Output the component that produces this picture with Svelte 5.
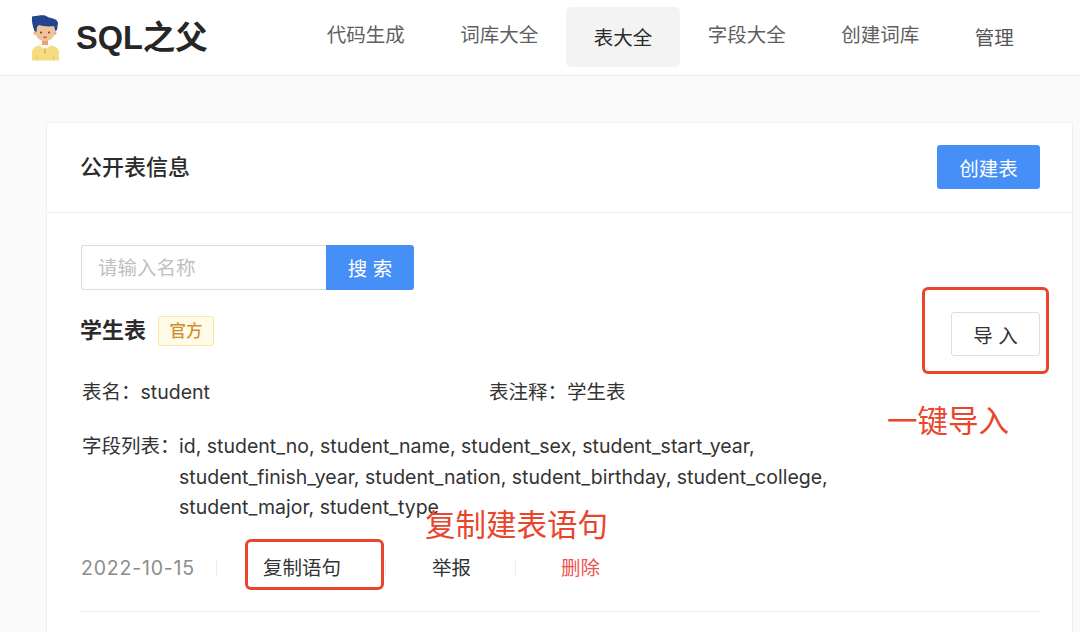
<script>
  const navItems = [
    { label: '代码生成' },
    { label: '词库大全' },
    { label: '表大全', active: true },
    { label: '字段大全' },
    { label: '创建词库' },
    { label: '管理', low: true }
  ];
</script>

<div class="page">
  <header class="nav">
    <div class="brand">
      <svg class="avatar" viewBox="0 0 30 46" width="30" height="46" aria-hidden="true">
        <path d="M1 45.500V37c0-3.500 3-5.500 8-7l5.500 2 5.500-2c5 1.500 8 3.500 8 7v8.500z" fill="#f6dc82"/>
        <path d="M9.500 27.500l4.500 3.500 4.500-3.500 2 3-6.500 3.500-6.500-3.500z" fill="#fbf7ee"/>
        <path d="M13.300 33.500h1.400l.5 5h-2.400z" fill="#e3b64f"/>
        <path d="M5.500 40h.8v5.500h-.8zM22 40h.8v5.500H22z" fill="#e9c561"/>
        <rect x="11" y="23" width="6" height="7" fill="#dfa678"/>
        <circle cx="4.500" cy="18" r="2" fill="#e6b088"/>
        <circle cx="23.500" cy="18" r="2" fill="#e6b088"/>
        <path d="M5 9h18v10c0 4-4 7-9 7s-9-3-9-7z" fill="#f0c39a"/>
        <path d="M1 1.500C6 1 10 0 14 .500L18 2.500C22 3 27 5 27 8L26 15 24 16 23 11C18 12 11 11 8 10L6 12 5.500 17 3.500 16C1.500 11 .5 6 1 1.500z" fill="#234590"/>
        <circle cx="10" cy="17.500" r="1" fill="#5b4436"/>
        <circle cx="18" cy="17.500" r="1" fill="#5b4436"/>
        <path d="M11.800 21.500h4.400c-.4 1.300-1.200 1.900-2.200 1.900s-1.800-.6-2.200-1.900z" fill="#d9605a"/>
      </svg>
      <span class="brand-name">SQL之父</span>
    </div>
    <nav class="menu">
      {#each navItems as item}
        <div class="menu-item" class:active={item.active} class:low={item.low}>{item.label}</div>
      {/each}
    </nav>
  </header>

  <main class="content">
    <section class="card">
      <div class="card-head">
        <h2>公开表信息</h2>
        <button class="btn primary create">创建表</button>
      </div>
      <div class="card-body">
        <div class="search">
          <div class="search-input">请输入名称</div>
          <button class="btn primary search-btn">搜 索</button>
        </div>

        <div class="title-row">
          <div class="title-left">
            <span class="title">学生表</span>
            <span class="tag">官方</span>
          </div>
          <button class="btn import">导 入</button>
        </div>

        <div class="info-row">
          <div class="info-cell"><span class="label">表名：</span>student</div>
          <div class="info-cell"><span class="label">表注释：</span>学生表</div>
        </div>

        <div class="fields">
          <div class="fields-label">字段列表：</div>
          <div class="fields-value">id, student_no, student_name, student_sex, student_start_year, student_finish_year, student_nation, student_birthday, student_college, student_major, student_type</div>
        </div>

        <div class="actions">
          <span class="date">2022-10-15</span>
          <span class="act copy">复制语句</span>
          <span class="act report">举报</span>
          <span class="act del">删除</span>
        </div>
        <div class="divider"></div>
      </div>
    </section>
  </main>

  <div class="mark mark-import"></div>
  <div class="mark mark-copy"></div>
  <div class="note note-import">一键导入</div>
  <div class="note note-copy">复制建表语句</div>
</div>

<style>
  :global(body) {
    margin: 0;
    background: #fafafa;
    overflow: hidden;
  }
  .page {
    position: relative;
    width: 1080px;
    height: 632px;
    overflow: hidden;
    background: #fafafa;
    color: #2b2b2b;
    font-family: Inter, "Noto Sans CJK SC", sans-serif;
  }
  .nav {
    display: flex;
    align-items: center;
    height: 76px;
    box-sizing: border-box;
    background: #fff;
    border-bottom: 1px solid #ececec;
    padding-left: 31px;
  }
  .brand {
    display: flex;
    align-items: center;
    gap: 15px;
    width: 268px;
  }
  .avatar {
    display: block;
    margin-top: 0;
  }
  .brand-name {
    font-family: "Liberation Sans", "Noto Sans CJK SC", sans-serif;
    font-size: 32.500px;
    font-weight: 700;
    color: #262626;
    line-height: 44px;
  }
  .menu {
    display: flex;
    align-items: center;
    height: 60px;
    margin-top: -2px;
  }
  .menu-item {
    padding: 0 27.750px;
    height: 60px;
    box-sizing: border-box;
    font-size: 19.500px;
    line-height: 57px;
    color: #5f5f5f;
    border-radius: 5px;
    white-space: nowrap;
  }
  .menu-item.active {
    background: #f3f3f3;
    color: #2b2b2b;
    line-height: 62px;
  }
  .menu-item.low {
    color: #555;
    line-height: 62px;
  }
  .content {
    padding: 46px 7px 0 46px;
  }
  .card {
    min-height: 600px;
    background: #fff;
    border: 1px solid #f0f0f0;
    border-radius: 3px;
  }
  .card-head {
    display: flex;
    align-items: center;
    justify-content: space-between;
    height: 90px;
    padding: 0 32px 1px 33px;
    box-sizing: border-box;
    border-bottom: 1px solid #efefef;
  }
  h2 {
    margin: -4px 0 0;
    font-size: 22px;
    font-weight: 500;
    color: #2b2b2b;
  }
  .btn {
    display: block;
    margin: 0;
    padding: 0;
    border: 0;
    border-radius: 3px;
    font-family: inherit;
    font-size: 19.500px;
  }
  .primary {
    background: #458ff7;
    color: #fff;
  }
  .create {
    width: 103px;
    height: 44px;
  }
  .card-body {
    padding: 32px 32px 0 34px;
  }
  .search {
    display: flex;
    width: 333px;
    height: 45px;
  }
  .search-input {
    flex: 1;
    box-sizing: border-box;
    border: 1px solid #dcdcdc;
    border-right: 0;
    border-radius: 3px 0 0 3px;
    padding-left: 16px;
    font-size: 19.500px;
    line-height: 44px;
    color: #bfbfbf;
  }
  .search-btn {
    width: 88px;
    border-radius: 0 3px 3px 0;
  }
  .title-row {
    display: flex;
    align-items: center;
    justify-content: space-between;
    margin-top: 22px;
    height: 44px;
  }
  .title-left {
    display: flex;
    align-items: center;
    gap: 12px;
    margin-top: -6px;
    margin-left: -1px;
  }
  .title {
    font-size: 22px;
    font-weight: 700;
    color: #2b2b2b;
    line-height: 30px;
    margin-top: -3px;
  }
  .tag {
    box-sizing: border-box;
    width: 56px;
    height: 30px;
    border: 1px solid #fce6a0;
    border-radius: 3px;
    background: #fffbe8;
    color: #cf8f30;
    font-size: 16.500px;
    font-weight: 500;
    line-height: 28px;
    text-align: center;
  }
  .import {
    box-sizing: border-box;
    width: 89px;
    height: 44px;
    background: #fff;
    border: 1px solid #dedede;
    color: #333;
  }
  .info-row {
    display: flex;
    margin-top: 21px;
    font-size: 19.500px;
    line-height: 30px;
    color: #333;
  }
  .info-cell {
    width: 408px;
    padding-left: 1px;
    box-sizing: border-box;
  }
  .info-cell:last-child {
    padding-left: 0;
  }
  .label {
    color: #333;
  }
  .fields {
    display: flex;
    margin-top: 24px;
    font-size: 19.500px;
    line-height: 30.500px;
    color: #333;
  }
  .fields-label {
    flex: none;
    width: 98px;
    padding-left: 1px;
    box-sizing: border-box;
    white-space: nowrap;
  }
  .fields-value {
    width: 660px;
  }
  .actions {
    display: flex;
    align-items: center;
    margin-top: 30px;
    height: 30px;
    font-size: 19.500px;
  }
  .date {
    width: 136px;
    color: #8c8c8c;
    border-right: 1px solid #eee;
    line-height: 18px;
    letter-spacing: 0.800px;
    box-sizing: border-box;
    white-space: nowrap;
  }
  .act {
    display: block;
    line-height: 18px;
    white-space: nowrap;
    box-sizing: border-box;
    color: #333;
  }
  .copy {
    width: 169px;
    padding-left: 46px;
    border-right: 1px solid #eee;
  }
  .report {
    width: 130px;
    padding-left: 46px;
    border-right: 1px solid #eee;
  }
  .del {
    padding-left: 45px;
    color: #ef5350;
  }
  .divider {
    margin-top: 28px;
    height: 1px;
    background: #efefef;
  }
  .mark {
    position: absolute;
    box-sizing: border-box;
    border: 3px solid #e8452c;
    border-radius: 6px;
  }
  .mark-import {
    left: 922px;
    top: 287px;
    width: 127px;
    height: 87px;
  }
  .mark-copy {
    left: 245px;
    top: 539px;
    width: 139px;
    height: 51px;
  }
  .note {
    position: absolute;
    color: #e8452c;
    font-size: 30.500px;
    line-height: 36px;
    white-space: nowrap;
  }
  .note-import {
    left: 887px;
    top: 403px;
  }
  .note-copy {
    left: 425px;
    top: 507px;
  }
</style>
